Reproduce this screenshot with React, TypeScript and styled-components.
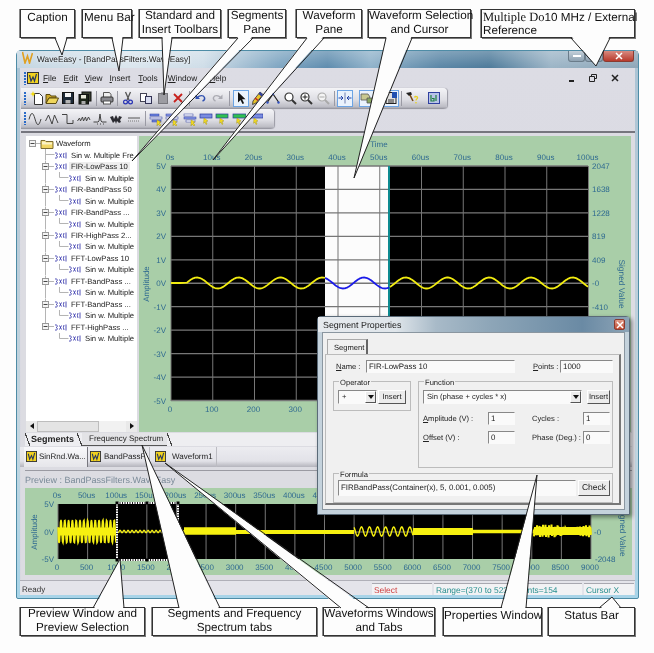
import React from 'react';
import styled, { createGlobalStyle } from 'styled-components';

const GlobalStyle = createGlobalStyle`
  html, body { margin: 0; padding: 0; background: #fdfdfd; }
  * { box-sizing: border-box; }
`;

const SANS = '"Liberation Sans", Arial, sans-serif';

const Page = styled.div`
  position: relative;
  width: 654px;
  height: 653px;
  padding-top: 9px;
  overflow: hidden;
  background: #fdfdfd;
  font-family: ${SANS};
  text-rendering: geometricPrecision;
  filter: blur(0.35px);
`;

/* ---------- callouts ---------- */

const CalloutRow = styled.div<{ $top: number }>`
  display: flex;
  height: 29px;
  margin-top: ${(p) => p.$top}px;
  padding-left: 20px;
`;

const Callout = styled.div<{ $w: number; $gap?: number; $left?: boolean }>`
  width: ${(p) => p.$w}px;
  margin-left: ${(p) => p.$gap || 0}px;
  padding: ${(p) => (p.$left ? '1px 0 0 1px' : '1px 0 0')};
  border: 1px solid #333;
  box-shadow: 1px 1px 0 #777, -1px 0 0 #888;
  background: #fdfdfd;
  color: #111;
  font-size: 11.7px;
  line-height: 14px;
  text-align: ${(p) => (p.$left ? 'left' : 'center')};
  white-space: nowrap;
`;

const TwoLines = styled.div`
  margin-top: -2px;
`;

const MixedLabel = styled.div`
  line-height: 13px;
`;

const SerifPart = styled.span`
  font-family: "Liberation Serif", serif;
  font-size: 12.5px;
`;

const Overlay = styled.svg`
  position: absolute;
  left: 0;
  top: 0;
  pointer-events: none;
`;

/* ---------- window frame ---------- */

const Win = styled.div`
  position: relative;
  width: 623px;
  height: 549px;
  margin: 12px 0 0 16px;
  padding: 0 3px 3px 3px;
  border: 1px solid #4e8ca6;
  border-radius: 5px 5px 2px 2px;
  background: linear-gradient(#a9c3d4, #b9cbd8 30%, #c4d6e0 70%, #a8d4e8);
`;

const TitleBar = styled.div`
  display: flex;
  align-items: flex-start;
  height: 17px;
  margin: 0 -3px;
  padding: 0 4px 0 5px;
  background:
    linear-gradient(rgba(255, 255, 255, 0.25), rgba(255, 255, 255, 0)),
    linear-gradient(90deg, #c4d6e2 0, #dbe6ee 18%, #cfdde8 30%, #7fa6c2 42%, #5e8cae 50%, #8fb2ca 57%, #5a86a6 68%, #4d7a9a 76%, #9bb4c6 86%, #8ea6b8 100%);
  color: #222;
  font-size: 8.3px;
  line-height: 17px;
`;

const TitleText = styled.span`
  margin-left: 4px;
  text-shadow: 0 0 3px #fff;
`;

const CaptionButton = styled.div<{ $w: number; $close?: boolean }>`
  display: flex;
  align-items: center;
  justify-content: center;
  width: ${(p) => p.$w}px;
  height: 11px;
  border: 1px solid ${(p) => (p.$close ? '#8a3a30' : '#6a7c8a')};
  border-top: 0;
  border-radius: 0 0 3px 3px;
  background: ${(p) => (p.$close ? 'linear-gradient(#d88a80, #b83a2c)' : 'linear-gradient(#c4d0da, #8ea2b2)')};
`;

const CaptionButtons = styled.div`
  display: flex;
  margin-left: auto;
`;

const Client = styled.div`
  display: flex;
  flex-direction: column;
  height: 527px;
  background: linear-gradient(#dcdce4, #d8d8e0);
`;

/* ---------- menu and toolbars ---------- */

const MenuBar = styled.div`
  display: flex;
  align-items: center;
  height: 21px;
  padding: 0 16px 0 4px;
  color: #222;
  font-size: 8.3px;
`;

const Grip = styled.span`
  width: 2px;
  height: 13px;
  margin-right: 1px;
  background: repeating-linear-gradient(#2a6ac8 0 2px, transparent 2px 3px);
`;

const MenuItems = styled.div`
  display: flex;
  margin-left: 4px;
`;

const MenuItem = styled.span<{ $ml: number }>`
  margin-left: ${(p) => p.$ml}px;
`;

const Mn = styled.span`
  text-decoration: underline;
`;

const MdiButtons = styled.div`
  display: flex;
  align-items: center;
  gap: 14px;
  margin-left: auto;
`;

const ToolRow = styled.div<{ $w: number }>`
  display: flex;
  align-items: center;
  width: ${(p) => p.$w}px;
  height: 21px;
  margin-left: 1px;
  padding-left: 3px;
  border-radius: 0 4px 4px 0;
  background: linear-gradient(#f4f4f7, #dedee4 55%, #bcbcc4 90%, #8e8e98);
  box-shadow: 1px 0 1px #9a9aa4;
`;

const ToolButton = styled.div<{ $ml?: number; $on?: boolean }>`
  display: flex;
  align-items: center;
  justify-content: center;
  flex: none;
  width: 16px;
  height: 17px;
  margin-left: ${(p) => p.$ml || 0}px;
  border: 1px solid ${(p) => (p.$on ? '#6ca4e4' : 'transparent')};
  background: ${(p) => (p.$on ? '#eaf2fc' : 'transparent')};
`;

const Sep = styled.span<{ $w: number }>`
  flex: none;
  width: ${(p) => p.$w}px;
  height: 15px;
  background: linear-gradient(#9a9aa4, #9a9aa4) center / 1px 100% no-repeat;
`;

/* ---------- work area ---------- */

const WorkFrame = styled.div`
  margin: 2px 0 0 1px;
  padding: 3px 3px 0 5px;
  border-top: 2px solid #76767e;
  background: #dcdce2;
`;

const PaneRow = styled.div`
  display: flex;
  gap: 2px;
  height: 296px;
`;

const TreePane = styled.div`
  display: flex;
  flex-direction: column;
  width: 111px;
  background: #fff;
`;

const TreeBody = styled.div`
  flex: 1;
  padding: 2px 0 0 2px;
  overflow: hidden;
  color: #222;
  font-size: 7.7px;
`;

const TreeRow = styled.div`
  display: flex;
  align-items: center;
  height: 11.47px;
  white-space: nowrap;
`;

const TreeLabel = styled.span<{ $sel?: boolean; $gap: number }>`
  margin-left: ${(p) => p.$gap}px;
  padding: 0 ${(p) => (p.$sel ? 2 : 0)}px;
  background: ${(p) => (p.$sel ? '#eeeeee' : 'transparent')};
`;

const ScrollBar = styled.div`
  display: flex;
  flex: none;
  align-items: stretch;
  height: 11px;
  background: #f1f1f1;
`;

const ScrollEnd = styled.div`
  display: flex;
  align-items: center;
  justify-content: center;
  width: 11px;
  background: #e9e9e9;
`;

const ScrollThumb = styled.div`
  width: 62px;
  border: 1px solid #bdbdbd;
  background: #e4e4e4;
`;

const ScrollSpace = styled.div`
  flex: 1;
`;

const ChartPanel = styled.div`
  width: 492px;
  background: #a9cea8;
`;

const ChartSvg = styled.svg`
  display: block;
  font-family: ${SANS};
`;

/* ---------- bottom tabs ---------- */

const SegTabs = styled.div`
  display: flex;
  align-items: center;
  height: 13px;
  margin: 1px 0 0 -1px;
  color: #222;
  font-size: 8px;
  background: #eeeef1;
`;

const Slash = styled.span<{ $back?: boolean }>`
  flex: none;
  width: 5px;
  height: 13px;
  background: linear-gradient(
    ${(p) => (p.$back ? 'to top right' : 'to bottom left')},
    transparent 44%,
    #444 44%,
    #444 56%,
    transparent 56%
  );
`;

const ActiveSeg = styled.span`
  width: 47px;
  padding-left: 1px;
  font-size: 9px;
  font-weight: 700;
`;

const IdleSeg = styled.span`
  width: 85px;
  height: 13px;
  padding-left: 7px;
  border-bottom: 1px solid #555;
  background: #e3e3e6;
  line-height: 12px;
`;

const DocTabs = styled.div`
  display: flex;
  height: 20px;
  margin: 1px 0 0 -6px;
  padding-left: 4px;
  background: linear-gradient(#ececf0, #e2e2e8 70%, #b4b4bc);
  color: #222;
  font-size: 8px;
`;

const DocTab = styled.div<{ $w: number; $ml?: number; $gap: number; $raised?: boolean }>`
  display: flex;
  align-items: center;
  gap: ${(p) => p.$gap}px;
  width: ${(p) => p.$w}px;
  margin-left: ${(p) => p.$ml || 0}px;
  padding-left: 2px;
  border-right: 1px solid ${(p) => (p.$raised ? '#77777e' : '#bcbcc2')};
  background: ${(p) => (p.$raised ? 'linear-gradient(#f8f8fa, #e6e6ea)' : 'transparent')};
  overflow: hidden;
  white-space: nowrap;
`;

const PreviewFrame = styled.div`
  height: 110px;
  margin: 3px 0 0 -1px;
  border-top: 1px solid #9a9aa2;
`;

const PreviewTitle = styled.div`
  height: 17px;
  color: #7a8a98;
  font-size: 9px;
  line-height: 19px;
  white-space: nowrap;
`;

const PreviewPanel = styled.div`
  width: 607px;
  background: #a9cea8;
`;

/* ---------- status bar ---------- */

const StatusBar = styled.div`
  display: flex;
  align-items: stretch;
  height: 15px;
  padding: 2px 1px 0 2px;
  border-top: 1px solid #b0b0b8;
  background: #e4e4ea;
  font-size: 8px;
`;

const Ready = styled.div`
  flex: 1;
  color: #333;
  line-height: 13px;
`;

const StatusPane = styled.div<{ $w: number; $color: string }>`
  width: ${(p) => p.$w}px;
  margin-left: 2px;
  padding-left: 2px;
  border-top: 1px solid #a8a8b0;
  background: #f2f2f4;
  color: ${(p) => p.$color};
  font-size: 8.4px;
  line-height: 12px;
  white-space: nowrap;
  overflow: hidden;
`;

/* ---------- properties dialog ---------- */

const Dialog = styled.div`
  position: absolute;
  left: 300px;
  top: 265px;
  width: 313px;
  height: 199px;
  padding: 0 4px 4px;
  border: 1px solid #5a6a78;
  border-radius: 4px 4px 0 0;
  background: #c4d2dc;
  box-shadow: 2px 2px 4px rgba(0, 0, 0, 0.45);
`;

const DialogTitle = styled.div`
  display: flex;
  align-items: center;
  justify-content: space-between;
  height: 15px;
  margin: 0 -4px;
  padding: 0 4px 0 5px;
  background: linear-gradient(90deg, #e6eaee 0, #dfe5ea 25%, #a8bac8 38%, #8ea6b8 55%, #6a8aa4 85%, #8da4b6 100%);
  color: #222;
  font-size: 8.9px;
`;

const DialogClose = styled.div`
  display: flex;
  align-items: center;
  justify-content: center;
  width: 11px;
  height: 11px;
  border: 1px solid #8a3a30;
  border-radius: 2px;
  background: linear-gradient(#e09a88, #c04a30);
`;

const DialogBody = styled.div`
  height: 178px;
  padding: 6px 0 0 2px;
  border: 1px solid #8a96a0;
  background: #f0f0f0;
  color: #222;
  font-size: 7.6px;
`;

const DialogTab = styled.div`
  width: 41px;
  height: 16px;
  margin-left: 2px;
  padding: 3px 0 0 6px;
  border: 1px solid #aaa;
  border-right: 2px solid #666;
  border-bottom: 0;
  background: #f0f0f0;
`;

const TabPage = styled.div`
  width: 296px;
  height: 151px;
  margin-top: -1px;
  padding: 5px 0 0 7px;
  border: 1px solid #bbb;
  border-right: 2px solid #777;
  border-bottom: 2px solid #777;
`;

const NameRow = styled.div`
  display: flex;
  align-items: center;
  height: 13px;
`;

const FieldLabel = styled.span<{ $w: number; $ml?: number }>`
  flex: none;
  width: ${(p) => p.$w}px;
  margin-left: ${(p) => p.$ml || 0}px;
  white-space: nowrap;
`;

const Field = styled.div<{ $w: number; $h?: number }>`
  flex: none;
  width: ${(p) => p.$w}px;
  height: ${(p) => p.$h || 13}px;
  padding-left: 2px;
  border: 1px solid;
  border-color: #888 #fafafa #fafafa #888;
  background: #fafafa;
  font-size: 7.9px;
  line-height: ${(p) => (p.$h || 13) - 2}px;
  white-space: nowrap;
  overflow: hidden;
`;

const GroupRow = styled.div`
  display: flex;
  align-items: flex-start;
  gap: 7px;
  margin-top: 8px;
`;

const Group = styled.div<{ $w: number; $h: number; $top?: number; $padTop?: number }>`
  position: relative;
  width: ${(p) => p.$w}px;
  height: ${(p) => p.$h}px;
  margin-top: ${(p) => p.$top || 0}px;
  padding: ${(p) => p.$padTop || 8}px 0 0 4px;
  border: 1px solid #bcbcbc;
`;

const GroupTitle = styled.span`
  position: absolute;
  left: 5px;
  top: -4px;
  padding: 0 1px;
  background: #f0f0f0;
  line-height: 9px;
`;

const ComboRow = styled.div<{ $h?: number }>`
  display: flex;
  align-items: stretch;
  height: ${(p) => p.$h || 14}px;
`;

const Combo = styled.div<{ $w: number }>`
  display: flex;
  justify-content: space-between;
  width: ${(p) => p.$w}px;
  padding-left: 3px;
  border: 1px solid;
  border-color: #888 #fafafa #fafafa #888;
  background: #fafafa;
  line-height: 12px;
  white-space: nowrap;
`;

const ComboArrow = styled.span`
  display: flex;
  align-items: center;
  justify-content: center;
  width: 11px;
  border: 1px solid;
  border-color: #fff #555 #555 #fff;
  background: #ececec;
  &::after {
    content: '';
    border: 3px solid transparent;
    border-top: 4px solid #111;
    border-bottom: 0;
  }
`;

const PushButton = styled.div<{ $w: number; $ml?: number; $big?: boolean }>`
  width: ${(p) => p.$w}px;
  margin-left: ${(p) => p.$ml || 0}px;
  border: 1px solid;
  border-color: #fff #555 #555 #fff;
  background: #ececec;
  font-size: ${(p) => (p.$big ? 8.5 : 7.6)}px;
  line-height: ${(p) => (p.$big ? 13 : 11)}px;
  text-align: center;
`;

const ParamRow = styled.div<{ $top: number }>`
  display: flex;
  align-items: center;
  height: 13px;
  margin-top: ${(p) => p.$top}px;
`;

/* ---------- drawn icons ---------- */

const Svg = ({ w = 14, h = 14, children }: { w?: number; h?: number; children: React.ReactNode }) => (
  <svg width={w} height={h} viewBox={`0 0 ${w} ${h}`} fill="none">
    {children}
  </svg>
);

const bars = (cols: string[]) => (
  <>
    {cols.map((c, i) => (
      <rect key={i} x={i === 2 ? 3 : 1} y={2 + i * 3} width={i === 1 ? 12 : 9} height={2} fill={c} stroke="#2a3aa0" strokeWidth={0.5} />
    ))}
    <path d="M8 8l4 2-2 1 2 2-1 1-2-2-1 2z" fill="#f5dc20" stroke="#9a8a10" strokeWidth={0.4} />
  </>
);

const slim = (fill: string, w: number) => (
  <>
    <rect x={1} y={2} width={w} height={4} fill={fill} stroke="#2a3aa0" strokeWidth={0.7} />
    <path d="M5 6l4 3-2 .6 1 2.400-1 .5-1-2.400-1.400 1.200z" fill="#f5dc20" stroke="#9a8a10" strokeWidth={0.4} />
  </>
);

const ICONS: Record<string, React.ReactNode> = {
  new: (
    <>
      <path d="M4.500 2.500h5l3 3v8h-8z" fill="#fff" stroke="#333" />
      <path d="M3 0l.8 2.200L6 3l-2.200.8L3 6l-.8-2.200L0 3l2.200-.8z" fill="#f4d800" />
    </>
  ),
  open: (
    <>
      <path d="M1 3.500h4l1 1.500h5v2H4l-3 5z" fill="#cda92c" stroke="#5a4a10" />
      <path d="M4 7h9.500L11 12.500H1z" fill="#efd65c" stroke="#5a4a10" />
    </>
  ),
  save: (
    <>
      <rect x={1.500} y={1.500} width={11} height={11} fill="#1c2836" stroke="#111" />
      <rect x={4} y={2} width={6} height={4} fill="#f4f4f4" />
      <rect x={4.500} y={9} width={5} height={3.500} fill="#b4b4b4" />
    </>
  ),
  all: (
    <>
      <rect x={4} y={1} width={9} height={9} fill="#3a4030" stroke="#111" />
      <rect x={1} y={3.500} width={9.500} height={9.500} fill="#1c2418" stroke="#111" />
      <rect x={3} y={4} width={5} height={3.500} fill="#e8e8d8" />
      <rect x={3.500} y={10} width={4} height={3} fill="#aaa" />
    </>
  ),
  print: (
    <>
      <path d="M3.500 6V1.500h6l1.500 2V6" fill="#eee" stroke="#555" />
      <rect x={1} y={6} width={12} height={5} rx={1} fill="#8a8a90" stroke="#333" />
      <rect x={3.500} y={10} width={7} height={3} fill="#fff" stroke="#555" />
    </>
  ),
  cut: (
    <>
      <path d="M4.500 1l3.500 8M9.500 1L6 9" stroke="#555" strokeWidth={1.300} />
      <circle cx={4.500} cy={11} r={1.900} stroke="#2430b4" strokeWidth={1.200} />
      <circle cx={9.500} cy={11} r={1.900} stroke="#2430b4" strokeWidth={1.200} />
    </>
  ),
  copy: (
    <>
      <rect x={1.500} y={2.500} width={6} height={8} fill="#fff" stroke="#445" />
      <rect x={6.500} y={5.500} width={6} height={7} fill="#d8dcf0" stroke="#335" />
    </>
  ),
  paste: (
    <>
      <rect x={2.500} y={2.500} width={9} height={10} fill="#9c9ca2" stroke="#77777d" />
      <rect x={5} y={1.500} width={4} height={2} fill="#77777d" />
    </>
  ),
  del: <path d="M3 3l8 8M11 3l-8 8" stroke="#c8201c" strokeWidth={1.800} />,
  undo: (
    <>
      <path d="M3.500 6.500c2-2.500 6-2.500 7 0 .5 1.500-.5 3-2 3.500" stroke="#3050b0" strokeWidth={1.400} />
      <path d="M1.500 3.500v4.500h4.500z" fill="#3050b0" />
    </>
  ),
  redo: (
    <>
      <path d="M10.500 6.500c-2-2.500-6-2.500-7 0-.5 1.500.5 3 2 3.500" stroke="#aaaab2" strokeWidth={1.400} />
      <path d="M12.500 3.500v4.500H8z" fill="#aaaab2" />
    </>
  ),
  pointer: <path d="M4 1v10.500l2.500-2.500 2 4 1.600-.8-2-3.900H11.500z" fill="#111" />,
  pen: (
    <>
      <path d="M10 1l3 2.500-7 8.500-3.500 1.500.5-3.500z" fill="#e8c428" stroke="#333" strokeWidth={0.8} />
      <path d="M5 7l3 2.500" stroke="#c02020" strokeWidth={1.400} />
      <path d="M10 1l3 2.500-1.500 2-3-2.500z" fill="#3040a0" />
    </>
  ),
  chev: (
    <>
      <path d="M1.500 11L7 3l5.500 8" stroke="#222" strokeWidth={1.200} />
      <circle cx={1.500} cy={11.500} r={1.200} fill="#3050c0" />
      <circle cx={7} cy={3} r={1.200} fill="#3050c0" />
      <circle cx={12.500} cy={11.500} r={1.200} fill="#3050c0" />
    </>
  ),
  zoom: (
    <>
      <circle cx={6} cy={6} r={4} fill="#fff" stroke="#333" strokeWidth={1.200} />
      <path d="M9 9l4 4" stroke="#333" strokeWidth={2} />
    </>
  ),
  zin: (
    <>
      <circle cx={6} cy={6} r={4} fill="#fff" stroke="#333" strokeWidth={1.200} />
      <path d="M9 9l4 4" stroke="#333" strokeWidth={2} />
      <path d="M6 3.500v5M3.500 6h5" stroke="#222" />
    </>
  ),
  zout: (
    <>
      <circle cx={6} cy={6} r={4} fill="#f4f4f4" stroke="#aaa" strokeWidth={1.200} />
      <path d="M9 9l4 4" stroke="#aaa" strokeWidth={2} />
      <path d="M3.500 6h5" stroke="#aaa" />
    </>
  ),
  fit: (
    <>
      <path d="M7 1.500v11" stroke="#7080b0" />
      <path d="M.5 7h4M3 5l2 2-2 2M13.500 7h-4M11 5L9 7l2 2" stroke="#2444a8" />
    </>
  ),
  ruler: (
    <>
      <path d="M1 3h7l2 3-2 3H1z" fill="#c8c890" stroke="#555" strokeWidth={0.8} />
      <path d="M7 7h6v5H7z" fill="#8aa860" stroke="#555" strokeWidth={0.8} />
    </>
  ),
  disk: (
    <>
      <rect x={2} y={1.500} width={10} height={11} fill="#e0e0e0" stroke="#222" />
      <rect x={8} y={1} width={5} height={6} fill="#2050b0" />
      <rect x={4} y={8} width={6} height={4} fill="#888" />
    </>
  ),
  hammer: (
    <>
      <path d="M1 2l5-1 1 2.500L4 5z" fill="#222" />
      <path d="M5 4l3 6" stroke="#7a4a18" strokeWidth={1.600} />
      <path d="M9.500 6.500c.6-1.500 3.500-1.200 3 .6-.3 1-1.500 1-1.500 2.400" stroke="#e8d020" strokeWidth={1.300} />
      <rect x={10.300} y={11} width={1.400} height={1.400} fill="#e8d020" />
    </>
  ),
  box: (
    <>
      <rect x={1.500} y={1.500} width={11} height={11} fill="#b8c4e8" stroke="#3040a0" />
      <path d="M4 4v6h3V7.500H5M9 4v6" stroke="#208040" strokeWidth={1.200} />
    </>
  ),
  sin: <path d="M1 7.500c2-8 4-8 6-.5s4 7.500 6 0" stroke="#444" />,
  tri: <path d="M.5 9L3.500 3l3.500 9 2.500-9 3.500 8" stroke="#444" />,
  square: <path d="M1 2.500h5v9h6V8" stroke="#444" />,
  noise: <path d="M.5 9l2-3 1 3 2-4 1 4 2-4 1 4 2-4 1.500 3" stroke="#444" />,
  pulse: <path d="M.5 10h4.500l1-1 1-7 1 7 1 1h4.500M4 12h1M7 12h1M10 12h1" stroke="#444" />,
  blob: <path d="M1 5l3-1 1 3 2-4 2 4 1-3 3 1-2 3 1 2-2 1-2-2-1 3-1-3-2 2-1-2z" fill="#2a2a30" />,
  dash: (
    <>
      <path d="M1 6h12" stroke="#555" />
      <path d="M1 9h12" stroke="#777" strokeDasharray="1 1" />
    </>
  ),
  ins1: bars(['#6c84e0', '#e8e8f4', '#6c84e0']),
  ins2: bars(['#8c9ce8', '#fff', '#e8e8f4']),
  ins3: bars(['#fff', '#8c9ce8', '#fff']),
  ins4: slim('#7a8ce0', 12),
  ins5: slim('#30c050', 12),
  ins6: slim('#30c050', 13),
  ins7: slim('#7a8ce0', 13),
};

type Tool = [string, number, boolean?, boolean?];

const ROW_ONE: Tool[] = [
  ['new', 2],
  ['open', -1],
  ['save', 0],
  ['all', 1],
  ['print', 6, true],
  ['cut', 5, true],
  ['copy', 2],
  ['paste', 1],
  ['del', -1],
  ['undo', 7, true],
  ['redo', 0],
  ['pointer', 8, true, true],
  ['pen', 0],
  ['chev', 0],
  ['zoom', 1],
  ['zin', 0],
  ['zout', 1],
  ['fit', 6, true, true],
  ['ruler', 6, false, true],
  ['disk', 8, false, true],
  ['hammer', 5, true],
  ['box', 6],
];

const ROW_TWO: Tool[] = [
  ['sin', 0],
  ['tri', 1],
  ['square', 0],
  ['noise', 0],
  ['pulse', 0],
  ['blob', 0],
  ['dash', 2],
  ['ins1', 6, true],
  ['ins2', 0],
  ['ins3', 2],
  ['ins4', 0],
  ['ins5', 0],
  ['ins6', 1],
  ['ins7', 1],
];

const Tools = ({ items }: { items: Tool[] }) => (
  <>
    <Grip />
    {items.map(([key, ml, sep, on]) => (
      <React.Fragment key={key}>
        {sep && <Sep $w={ml} />}
        <ToolButton $ml={sep ? 0 : ml} $on={on}>
          <Svg>{ICONS[key]}</Svg>
        </ToolButton>
      </React.Fragment>
    ))}
  </>
);

const LogoSvg = styled.svg`
  flex: none;
`;

const AppLogo = ({ size = 12 }: { size?: number }) => (
  <LogoSvg width={size} height={size} viewBox="0 0 12 12">
    <rect x={0.5} y={0.5} width={11} height={11} fill="#f2d21e" stroke="#333" />
    <path d="M2.500 3l1.500 6 2-4 1.500 4 2-7" fill="none" stroke="#2a3a60" strokeWidth={1.200} />
  </LogoSvg>
);

const TitleLogo = () => (
  <svg width={11} height={13} viewBox="0 0 11 13">
    <path d="M.5 1l2.500 11 2.500-7 2 7L10.500 2" fill="none" stroke="#e0a020" strokeWidth={1.600} />
  </svg>
);

const WaveGlyph = () => (
  <svg width={12} height={7} viewBox="0 0 12 7" fill="none" stroke="#3c3cae" strokeWidth={0.9}>
    <path d="M0 1c3-.5 3 2 1 2.500 2 .5 2 3-1 2.500" />
    <path d="M4.500 1.500l2 4M6.500 1.500l-2 4" />
    <path d="M9 1q-1.200 2.500 0 5M11 .5v6" />
  </svg>
);

/* ---------- tree ---------- */

type TreeNode = { label: string; kind: 'leaf' | 'parent' | 'child'; last?: boolean; sel?: boolean };

const filters = ['FIR-LowPass  10', 'FIR-BandPass 50', 'FIR-BandPass ...', 'FIR-HighPass 2...', 'FFT-LowPass  10', 'FFT-BandPass ...', 'FFT-BandPass ...', 'FFT-HighPass ...'];

const TREE: TreeNode[] = [
  { label: 'Sin w. Multiple Fre', kind: 'leaf' },
  ...filters.flatMap((label, i): TreeNode[] => [
    { label, kind: 'parent', sel: i === 0, last: i === filters.length - 1 },
    { label: 'Sin w. Multiple', kind: 'child', last: i === filters.length - 1 },
  ]),
];

const TreeLead = ({ node }: { node: TreeNode }) => {
  const w = node.kind === 'child' ? 41 : 27;
  const h = 11.47;
  const dots = { stroke: '#b4b4b4', strokeWidth: 1 };
  return (
    <svg width={w} height={h} viewBox={`0 0 ${w} ${h}`} fill="none" style={{ flex: 'none' }}>
      {!(node.kind === 'child' && node.last) && <path d={`M17.500 0V${node.last ? 6 : h}`} {...dots} />}
      {node.kind === 'leaf' && <path d="M17.500 5.500h9" {...dots} />}
      {node.kind === 'parent' && (
        <>
          <path d="M21 5.500h5" {...dots} />
          <rect x={14.500} y={2.500} width={6} height={6} fill="#f4f4f4" stroke="#999" />
          <path d="M15.500 5.500h4" stroke="#444" />
        </>
      )}
      {node.kind === 'child' && <path d="M31.500 0v5.500h9" {...dots} />}
    </svg>
  );
};

const RootLead = () => (
  <svg width={26} height={11.47} viewBox="0 0 26 11.47" fill="none" style={{ flex: 'none' }}>
    <rect x={1.500} y={2.500} width={6} height={6} fill="#f4f4f4" stroke="#999" />
    <path d="M2.500 5.500h4" stroke="#444" />
    <path d="M8 5.500h5" stroke="#b4b4b4" />
    <path d="M13 2.500h4l1 1h7v7H13z" fill="#f2d766" stroke="#7a6a30" />
    <path d="M14 3.500h3l1 1h6v2H14z" fill="#fbf3c8" />
  </svg>
);

/* ---------- charts ---------- */

const AXIS = '#2f6a90';

const trace = (x0: number, x1: number, fn: (x: number) => number, step = 1) => {
  let d = `M${x0} ${fn(x0).toFixed(2)}`;
  for (let x = x0 + step; x <= x1; x += step) d += `L${x.toFixed(2)} ${fn(x).toFixed(2)}`;
  return d;
};

const mainWave = (x: number) => 284 - 5.5 * Math.sin((2 * Math.PI * (x - 186.5)) / 41.75);

const MAIN_X = Array.from({ length: 11 }, (_, i) => 171 + i * 41.75);
const MAIN_Y = Array.from({ length: 11 }, (_, i) => 167 + i * 23.45);
const RIGHT_LABELS = ['2047', '1638', '1228', '819', '409', '-0', '-410'];

const MainChart = () => (
  <ChartSvg width={492} height={296} viewBox="139 137 492 296">
    <rect x={171} y={167} width={417} height={235} fill="#000" />
    <rect x={325} y={167} width={64} height={235} fill="#fcfcfc" />
    {MAIN_X.map((x) => (
      <path key={x} d={`M${x} 167V402`} stroke="#777" />
    ))}
    {MAIN_Y.map((y) => (
      <path key={y} d={`M171 ${y}H588`} stroke="#777" strokeWidth={1.300} />
    ))}
    <rect x={388} y={167} width={2} height={235} fill="#0d8a90" />
    <path d={`M171 284H180Q184 284 187 ${mainWave(187).toFixed(2)}${trace(187, 325, mainWave).replace('M', 'L')}`} fill="none" stroke="#f2ec10" strokeWidth={1.800} />
    <path d={trace(325, 389, mainWave)} fill="none" stroke="#1a1ae8" strokeWidth={1.800} />
    <path d={trace(390, 588, mainWave)} fill="none" stroke="#f2ec10" strokeWidth={1.800} />
    <g fontSize={8} fill={AXIS}>
      <text x={379} y={148} textAnchor="middle">Time</text>
      {MAIN_X.map((x, i) => (
        <text key={x} x={x - 1} y={161} textAnchor="middle">{i === 0 ? '0s' : `${i * 10}us`}</text>
      ))}
      {MAIN_X.slice(0, 4).map((x, i) => (
        <text key={x} x={x - 1} y={413} textAnchor="middle">{i * 100}</text>
      ))}
      {MAIN_Y.map((y, i) => (
        <text key={y} x={166} y={y + 3} textAnchor="end">{5 - i}V</text>
      ))}
      {RIGHT_LABELS.map((label, i) => (
        <text key={label} x={592} y={MAIN_Y[i] + 3}>{label}</text>
      ))}
      <text transform="translate(149 285) rotate(-90)" textAnchor="middle">Amplitude</text>
      <text transform="translate(619 285) rotate(90)" textAnchor="middle" fontSize={8.4}>Signed Value</text>
    </g>
  </ChartSvg>
);

const PREV_X = Array.from({ length: 19 }, (_, i) => 57 + i * 29.61);
const PREV_Y = [504, 532, 559];

const noise = (x: number) => Math.sin(x * 7.3) * 3.2 + Math.sin(x * 3.1 + 1) * 2.6 + Math.sin(x * 17.7) * 2.2;

const PreviewChart = () => (
  <ChartSvg width={607} height={87} viewBox="24 488 607 87">
    <rect x={57} y={504} width={533} height={55} fill="#000" />
    {PREV_X.map((x) => (
      <path key={x} d={`M${x} 504V559`} stroke="#777" />
    ))}
    <path d="M57 532H590" stroke="#777" />
    <g fill="none" stroke="#f6f010">
      <path d={trace(57, 115, (x) => 531.5 + 11.5 * Math.sign(Math.sin(x * 1.65)) * Math.abs(Math.sin(x * 1.65)) ** 0.6, 0.5)} strokeWidth={1.500} />
      <path d="M57 531.500H115" strokeWidth={8} />
      <path d={trace(117, 183, (x) => 531.5 + 1.2 * Math.sin(x * 1.57), 0.5)} strokeWidth={1.200} />
      <path d="M183 531H235" strokeWidth={7.500} />
      <path d="M235 532H353" strokeWidth={4} />
      <path d={trace(353, 412, (x) => 531.5 + 4.6 * Math.sin(x * 0.78), 0.5)} strokeWidth={1.400} />
      <path d="M412 531.500H472" strokeWidth={7} />
      <path d="M472 531.500H533" strokeWidth={3.500} />
      <path d={trace(533, 590, (x) => 531 + noise(x), 0.5)} strokeWidth={2} />
      <path d="M533 531H590" strokeWidth={8} />
    </g>
    <g fill="none">
      <path d="M116 503H177V560H116Z" stroke="#fff" strokeWidth={2} />
      <path d="M116 503H177V560H116Z" stroke="#222" strokeWidth={2} strokeDasharray="1 1.500" />
    </g>
    {[[116, 503], [146, 503], [177, 503], [116, 560], [146, 560], [177, 560]].map(([x, y]) => (
      <rect key={`${x}-${y}`} x={x - 1.500} y={y - 1.500} width={3} height={3} fill="#000" />
    ))}
    <g fontSize={8} fill={AXIS}>
      {PREV_X.slice(0, 10).map((x, i) => (
        <text key={x} x={x - 1} y={498} textAnchor="middle">{i === 0 ? '0s' : `${i * 50}us`}</text>
      ))}
      {PREV_X.map((x, i) => (
        <text key={x} x={x - 1} y={570} textAnchor="middle">{i * 500}</text>
      ))}
      {PREV_Y.map((y, i) => (
        <text key={y} x={53} y={y + 3} textAnchor="end">{['5V', '0V', '-5V'][i]}</text>
      ))}
      <text x={593} y={535}>-0</text>
      <text x={594} y={562}>-2048</text>
      <text transform="translate(36 532) rotate(-90)" textAnchor="middle">Amplitude</text>
      <text transform="translate(619 532) rotate(90)" textAnchor="middle" fontSize={8.4}>Signed Value</text>
    </g>
  </ChartSvg>
);

/* ---------- callout pointers, in page coordinates ---------- */

type Pointer = { a: number[]; b: number[]; tip: number[] };

const POINTERS: Pointer[] = [
  { a: [55, 38], b: [67, 38], tip: [62, 55] },
  { a: [112, 38], b: [123, 38], tip: [119, 71] },
  { a: [162, 38], b: [172, 38], tip: [164, 95] },
  { a: [238, 38], b: [253, 38], tip: [132, 161] },
  { a: [307, 38], b: [324, 38], tip: [213, 160] },
  { a: [386, 38], b: [412, 38], tip: [354, 178] },
  { a: [571, 38], b: [610, 38], tip: [596, 66] },
  { a: [93, 608], b: [124, 608], tip: [120, 559] },
  { a: [179, 608], b: [220, 608], tip: [142, 445] },
  { a: [341, 608], b: [369, 608], tip: [165, 463] },
  { a: [501, 608], b: [526, 608], tip: [537, 475] },
  { a: [599, 608], b: [621, 608], tip: [612, 597] },
];

const Pointers = () => (
  <Overlay width={654} height={653} viewBox="0 0 654 653">
    {POINTERS.map(({ a, b, tip }) => {
      const off = a[1] < 100 ? -1.500 : 1.500;
      return (
        <g key={a[0]}>
          <polygon points={`${a[0] + 0.5},${a[1] + off} ${b[0] - 0.5},${b[1] + off} ${tip[0]},${tip[1]}`} fill="#fdfdfd" />
          <path d={`M${a[0]} ${a[1]}L${tip[0]} ${tip[1]}L${b[0]} ${b[1]}`} fill="none" stroke="#222" />
        </g>
      );
    })}
  </Overlay>
);

/* ---------- page ---------- */

const MENU: [string, number][] = [['File', 0], ['Edit', 7], ['View', 7], ['Insert', 7], ['Tools', 8], ['Window', 10], ['Help', 12]];

const X = ({ c }: { c: string }) => (
  <Svg w={8} h={8}>
    <path d="M1 1l6 6M7 1L1 7" stroke={c} strokeWidth={1.500} />
  </Svg>
);

export default function App() {
  return (
    <Page>
      <GlobalStyle />
      <CalloutRow $top={0}>
        <Callout $w={55}>Caption</Callout>
        <Callout $w={50} $gap={7} $left>Menu Bar</Callout>
        <Callout $w={82} $gap={7}><TwoLines>Standard and<br />Insert Toolbars</TwoLines></Callout>
        <Callout $w={58} $gap={7}><TwoLines>Segments<br />Pane</TwoLines></Callout>
        <Callout $w={66} $gap={10}><TwoLines>Waveform<br />Pane</TwoLines></Callout>
        <Callout $w={103} $gap={6}><TwoLines>Waveform Selection<br />and Cursor</TwoLines></Callout>
        <Callout $w={154} $gap={10} $left>
          <MixedLabel><SerifPart>Multiple Do</SerifPart>10 MHz / External<br />Reference</MixedLabel>
        </Callout>
      </CalloutRow>

      <Win>
        <TitleBar>
          <TitleLogo />
          <TitleText>WaveEasy - [BandPassFilters.WaveEasy]</TitleText>
          <CaptionButtons>
            <CaptionButton $w={17}><Svg w={8} h={4}><rect x={0} y={1} width={8} height={2} fill="#fff" /></Svg></CaptionButton>
            <CaptionButton $w={18}><Svg w={8} h={8}><rect x={1} y={1} width={6} height={6} stroke="#fff" /></Svg></CaptionButton>
            <CaptionButton $w={31} $close><X c="#fff" /></CaptionButton>
          </CaptionButtons>
        </TitleBar>

        <Client>
          <MenuBar>
            <Grip />
            <AppLogo />
            <MenuItems>
              {MENU.map(([m, ml]) => (
                <MenuItem key={m} $ml={ml}><Mn>{m[0]}</Mn>{m.slice(1)}</MenuItem>
              ))}
            </MenuItems>
            <MdiButtons>
              <Svg w={7} h={7}><rect x={1} y={5} width={5} height={2} fill="#222" /></Svg>
              <Svg w={8} h={8}><path d="M2.500 2.500v-2h5v4h-2M.5 2.500h5v5h-5z" stroke="#222" /></Svg>
              <X c="#222" />
            </MdiButtons>
          </MenuBar>
          <ToolRow $w={426}><Tools items={ROW_ONE} /></ToolRow>
          <ToolRow $w={253}><Tools items={ROW_TWO} /></ToolRow>

          <WorkFrame>
            <PaneRow>
              <TreePane>
                <TreeBody>
                  <TreeRow>
                    <RootLead />
                    <TreeLabel $gap={2}>Waveform</TreeLabel>
                  </TreeRow>
                  {TREE.map((node, i) => (
                    <TreeRow key={i}>
                      <TreeLead node={node} />
                      <WaveGlyph />
                      <TreeLabel $gap={node.sel ? 2 : 4} $sel={node.sel}>{node.label}</TreeLabel>
                    </TreeRow>
                  ))}
                </TreeBody>
                <ScrollBar>
                  <ScrollEnd><Svg w={4} h={6}><path d="M4 0v6L0 3z" fill="#111" /></Svg></ScrollEnd>
                  <ScrollThumb />
                  <ScrollSpace />
                  <ScrollEnd><Svg w={4} h={6}><path d="M0 0v6l4-3z" fill="#111" /></Svg></ScrollEnd>
                </ScrollBar>
              </TreePane>
              <ChartPanel><MainChart /></ChartPanel>
            </PaneRow>

            <SegTabs>
              <Slash />
              <ActiveSeg>Segments</ActiveSeg>
              <Slash $back />
              <IdleSeg>Frequency Spectrum</IdleSeg>
              <Slash $back />
            </SegTabs>

            <DocTabs>
              <DocTab $w={64} $gap={2} $raised><AppLogo size={11} />SinRnd.Wa...</DocTab>
              <DocTab $w={62} $gap={3}><AppLogo size={11} />BandPassFi</DocTab>
              <DocTab $w={64} $gap={6} $ml={3}><AppLogo size={11} />Waveform1</DocTab>
            </DocTabs>

            <PreviewFrame>
              <PreviewTitle>Preview : BandPassFilters.WaveEasy</PreviewTitle>
              <PreviewPanel><PreviewChart /></PreviewPanel>
            </PreviewFrame>
          </WorkFrame>

          <StatusBar>
            <Ready>Ready</Ready>
            <StatusPane $w={60} $color="#d04040">Select</StatusPane>
            <StatusPane $w={148} $color="#2a9090">Range=(370 to 523)&nbsp;&nbsp;Points=154</StatusPane>
            <StatusPane $w={50} $color="#2a9090">Cursor X</StatusPane>
          </StatusBar>
        </Client>

        <Dialog>
          <DialogTitle>
            Segment Properties
            <DialogClose><X c="#fff" /></DialogClose>
          </DialogTitle>
          <DialogBody>
            <DialogTab>Segment</DialogTab>
            <TabPage>
              <NameRow>
                <FieldLabel $w={30} $ml={3}><Mn>N</Mn>ame :</FieldLabel>
                <Field $w={149}>FIR-LowPass  10</Field>
                <FieldLabel $w={27} $ml={18}><Mn>P</Mn>oints :</FieldLabel>
                <Field $w={53}>1000</Field>
              </NameRow>
              <GroupRow>
                <Group $w={78} $h={30}>
                  <GroupTitle>Operator</GroupTitle>
                  <ComboRow>
                    <Combo $w={39}>+<ComboArrow /></Combo>
                    <PushButton $w={28} $ml={1}>Insert</PushButton>
                  </ComboRow>
                </Group>
                <Group $w={195} $h={87}>
                  <GroupTitle>Function</GroupTitle>
                  <ComboRow>
                    <Combo $w={159}>Sin (phase + cycles * x)<ComboArrow /></Combo>
                    <PushButton $w={23} $ml={5}>Insert</PushButton>
                  </ComboRow>
                  <ParamRow $top={8}>
                    <FieldLabel $w={65}><Mn>A</Mn>mplitude (V) :</FieldLabel>
                    <Field $w={27}>1</Field>
                    <FieldLabel $w={51} $ml={17}>Cycles :</FieldLabel>
                    <Field $w={27}>1</Field>
                  </ParamRow>
                  <ParamRow $top={6}>
                    <FieldLabel $w={65}><Mn>O</Mn>ffset (V) :</FieldLabel>
                    <Field $w={27}>0</Field>
                    <FieldLabel $w={51} $ml={17}>Phase (Deg.) :</FieldLabel>
                    <Field $w={27}>0</Field>
                  </ParamRow>
                </Group>
              </GroupRow>
              <Group $w={280} $h={30} $top={5} $padTop={6}>
                <GroupTitle>Formula</GroupTitle>
                <ComboRow $h={16}>
                  <Field $w={238} $h={16}>FIRBandPass(Container(x), 5, 0.001, 0.005)</Field>
                  <PushButton $w={32} $ml={2} $big>Check</PushButton>
                </ComboRow>
              </Group>
            </TabPage>
          </DialogBody>
        </Dialog>
      </Win>

      <CalloutRow $top={8}>
        <Callout $w={125}><TwoLines>Preview Window and<br />Preview Selection</TwoLines></Callout>
        <Callout $w={165} $gap={7}><TwoLines>Segments and Frequency<br />Spectrum tabs</TwoLines></Callout>
        <Callout $w={112} $gap={6}><TwoLines>Waveforms Windows<br />and Tabs</TwoLines></Callout>
        <Callout $w={99} $gap={8}>Properties Window</Callout>
        <Callout $w={87} $gap={6}>Status Bar</Callout>
      </CalloutRow>

      <Pointers />
    </Page>
  );
}
